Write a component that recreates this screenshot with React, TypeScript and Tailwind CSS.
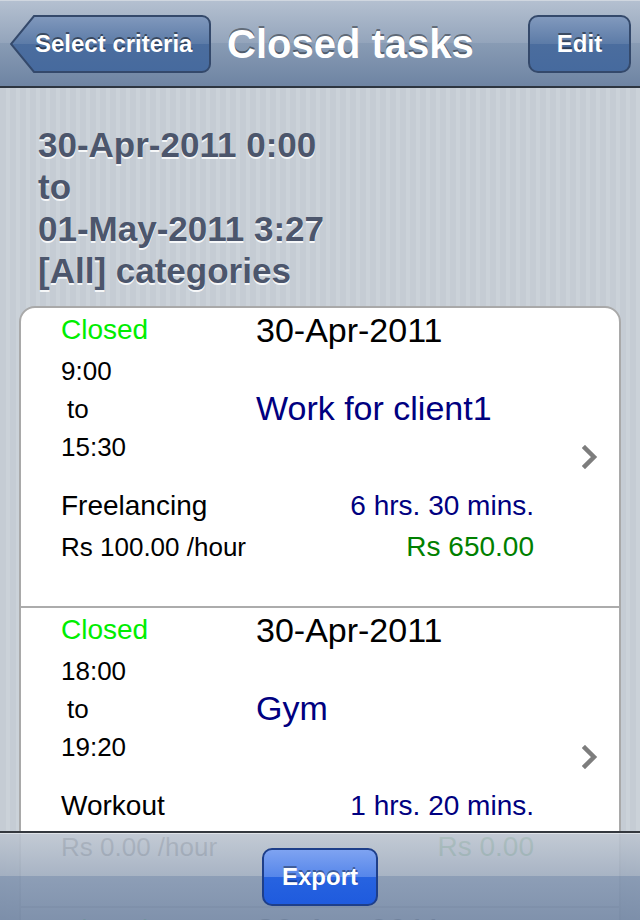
import React from 'react';

type Task = {
  start: string;
  end: string;
  title: string;
  category: string;
  rate: string;
  duration: string;
  amount: string;
};

const tasks: Task[] = [
  {
    start: '9:00',
    end: '15:30',
    title: 'Work for client1',
    category: 'Freelancing',
    rate: 'Rs 100.00 /hour',
    duration: '6 hrs. 30 mins.',
    amount: 'Rs 650.00',
  },
  {
    start: '18:00',
    end: '19:20',
    title: 'Gym',
    category: 'Workout',
    rate: 'Rs 0.00 /hour',
    duration: '1 hrs. 20 mins.',
    amount: 'Rs 0.00',
  },
  {
    start: '20:00',
    end: '21:00',
    title: 'Reading',
    category: 'Personal',
    rate: 'Rs 0.00 /hour',
    duration: '1 hrs. 0 mins.',
    amount: 'Rs 0.00',
  },
];

const Chevron = () => (
  <svg width="16" height="24" viewBox="0 0 16 24">
    <path d="M3 3 L12 12 L3 21" fill="none" stroke="#7d7d7d" strokeWidth="4.5" strokeLinecap="square" strokeLinejoin="miter" />
  </svg>
);

const BackButton = () => (
  <div className="relative h-[58px] w-[201px] shrink-0">
    <svg className="absolute inset-0" width="201" height="58" viewBox="0 0 201 58">
      <defs>
        <linearGradient id="backFill" x1="0" y1="0" x2="0" y2="1">
          <stop offset="0" stopColor="#8199bd" />
          <stop offset="0.5" stopColor="#5c7ba7" />
          <stop offset="0.5" stopColor="#4b6d9e" />
          <stop offset="1" stopColor="#466a9e" />
        </linearGradient>
      </defs>
      <path
        d="M24 1 H192 A8 8 0 0 1 200 9 V49 A8 8 0 0 1 192 57 H24 L1 29 Z"
        fill="url(#backFill)"
        stroke="#34496b"
        strokeWidth="2"
      />
    </svg>
    <div className="relative flex h-full items-center pl-[25px] text-[24px] font-bold text-white [text-shadow:0_-2px_0_rgba(0,0,0,0.45)]">
      Select criteria
    </div>
  </div>
);

const TaskCell = ({ task, last }: { task: Task; last?: boolean }) => (
  <div className={last ? 'flex h-[300px]' : 'flex h-[300px] border-b-2 border-[#acacac]'}>
    <div className="flex-1 pl-[40px] pt-[3px] text-[26px] leading-[38px] text-black">
      <div className="flex">
        <div className="w-[195px]">
          <div className="text-[28px] text-[#00ee00]">Closed</div>
          <div className="mt-[3px]">{task.start}</div>
          <div className="pl-[6px]">to</div>
          <div>{task.end}</div>
        </div>
        <div>
          <div className="text-[34px]">30-Apr-2011</div>
          <div className="mt-[40px] text-[34px] text-[#000080]">{task.title}</div>
        </div>
      </div>
      <div className="mt-[21px] w-[473px]">
        <div className="flex justify-between text-[28px]">
          <span>{task.category}</span>
          <span className="text-[#000080]">{task.duration}</span>
        </div>
        <div className="mt-[3px] flex justify-between">
          <span>{task.rate}</span>
          <span className="text-[28px] text-[#008000]">{task.amount}</span>
        </div>
      </div>
    </div>
    <div className="flex items-center pr-[21px]">
      <Chevron />
    </div>
  </div>
);

export default function App() {
  return (
    <div className="relative flex h-[920px] w-[640px] flex-col overflow-hidden bg-[image:repeating-linear-gradient(90deg,#c5ccd4_0px,#c5ccd4_6px,#cbd2d9_6px,#cbd2d9_10px)] font-['Liberation_Sans',Arial,sans-serif]">
      <div className="flex h-[88px] shrink-0 items-center border-t border-b-2 border-t-[#d0d7e0] border-b-[#2d3540] bg-[image:linear-gradient(180deg,#b4c0d0_0%,#93a4bb_50%,#889bb4_50%,#6e84a3_100%)] pl-[10px] pr-[9px]">
        <BackButton />
        <div className="ml-[16px] flex-1 text-[40px] font-bold text-white [text-shadow:0_-2px_0_rgba(0,0,0,0.4)]">
          Closed tasks
        </div>
        <div className="flex h-[58px] w-[103px] items-center justify-center rounded-[10px] border-2 border-[#34496b] bg-[image:linear-gradient(180deg,#8199bd_0%,#5c7ba7_50%,#4b6d9e_50%,#466a9e_100%)] text-[24px] font-bold text-white [text-shadow:0_-2px_0_rgba(0,0,0,0.45)]">
          Edit
        </div>
      </div>

      <div className="pt-[36px]">
        <div className="pl-[38px] text-[35px] font-bold leading-[42px] text-[#4c566c] [text-shadow:0_2px_0_rgba(255,255,255,0.85)]">
          <div>30-Apr-2011 0:00</div>
          <div>to</div>
          <div>01-May-2011 3:27</div>
          <div>[All] categories</div>
        </div>

        <div className="mx-[19px] mt-[14px] rounded-t-[16px] border-2 border-[#a9a9a9] bg-white">
          {tasks.map((t, i) => (
            <TaskCell key={i} task={t} last={i === tasks.length - 1} />
          ))}
        </div>
      </div>

      <div className="absolute bottom-0 left-0 right-0 flex h-[89px] items-center justify-center border-t-2 border-[#34383e] bg-[image:linear-gradient(180deg,rgba(190,198,209,0.92)_0%,rgba(160,173,191,0.92)_50%,rgba(134,152,178,0.94)_50%,rgba(120,139,167,0.94)_100%)] shadow-[inset_0_1px_0_rgba(255,255,255,0.45)]">
        <div className="flex h-[58px] w-[116px] items-center justify-center rounded-[10px] border-2 border-[#1e3f8a] bg-[image:linear-gradient(180deg,#7ea3f1_0%,#5686ea_50%,#2763e0_50%,#1f5bde_100%)] text-[24px] font-bold text-white [text-shadow:0_-2px_0_rgba(0,0,0,0.35)]">
          Export
        </div>
      </div>
    </div>
  );
}
